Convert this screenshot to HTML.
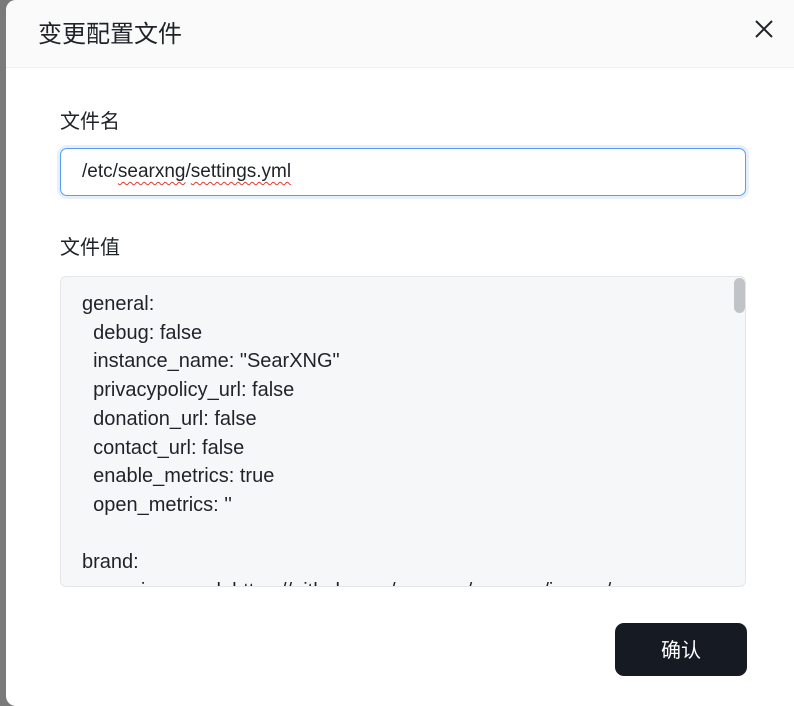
<!DOCTYPE html>
<html style="width:794px;height:706px;overflow:hidden"><head><meta charset="utf-8"><style>
*{box-sizing:border-box;margin:0;padding:0}
body{width:794px;height:706px;overflow:hidden;background:#7a7a7a;font-family:"Liberation Sans","Noto Sans CJK SC",sans-serif;color:#1f2329;position:relative}
.dlg{position:absolute;left:6px;top:0;width:788px;height:706px;background:#fff;border-radius:10px 0 0 10px;overflow:hidden}
.hd{height:68px;background:#fafafa;border-bottom:1px solid #eeeeee;position:relative}
.hd h1{position:absolute;left:32px;top:18px;font-size:24px;font-weight:400;color:#1f2329;line-height:34px}
.x{position:absolute;left:748px;top:19px}
.lbl{position:absolute;left:54px;font-size:20px;line-height:28px;color:#1f2329}
.inp{position:absolute;left:54px;top:148px;width:686px;height:48px;border:1px solid #5a9cf0;border-radius:7px;box-shadow:0 0 0 3px #e6f0fd;font-size:19px;padding-left:21px;line-height:46px;color:#1f2329}
.sq{text-decoration:underline wavy #e03a2e;text-decoration-thickness:1px;text-underline-offset:4px}
.ta{position:absolute;left:54px;top:276px;width:686px;height:311px;border:1px solid #e4e6ea;border-radius:6px;background:#f6f7f9;overflow:hidden;padding:13px 0 0 21px;font-size:20px;line-height:28.7px;white-space:pre;color:#1f2329}
.sb{position:absolute;left:728px;top:278px;width:11px;height:35px;background:#c1c3c6;border-radius:6px}
.btn{position:absolute;left:609px;top:623px;width:132px;height:53px;background:#151a23;border-radius:9px;color:#fff;font-size:20px;text-align:center;line-height:56px}
</style></head><body>
<div class="dlg">
<div class="hd"><h1>变更配置文件</h1>
<svg class="x" width="20" height="20" viewBox="0 0 20 20"><path d="M2 2L18 18M18 2L2 18" stroke="#1f2329" stroke-width="2" fill="none"/></svg></div>
<div class="lbl" style="top:108px">文件名</div>
<div class="inp">/etc/<span class="sq">searxng</span>/<span class="sq">settings.yml</span></div>
<div class="lbl" style="top:234px">文件值</div>
<div class="ta">general:
  debug: false
  instance_name: "SearXNG"
  privacypolicy_url: false
  donation_url: false
  contact_url: false
  enable_metrics: true
  open_metrics: ''

brand:
  new_issue_url: https://github.com/searxng/searxng/issues/new</div>
<div class="sb"></div>
<div class="btn">确认</div>
</div>
</body></html>
